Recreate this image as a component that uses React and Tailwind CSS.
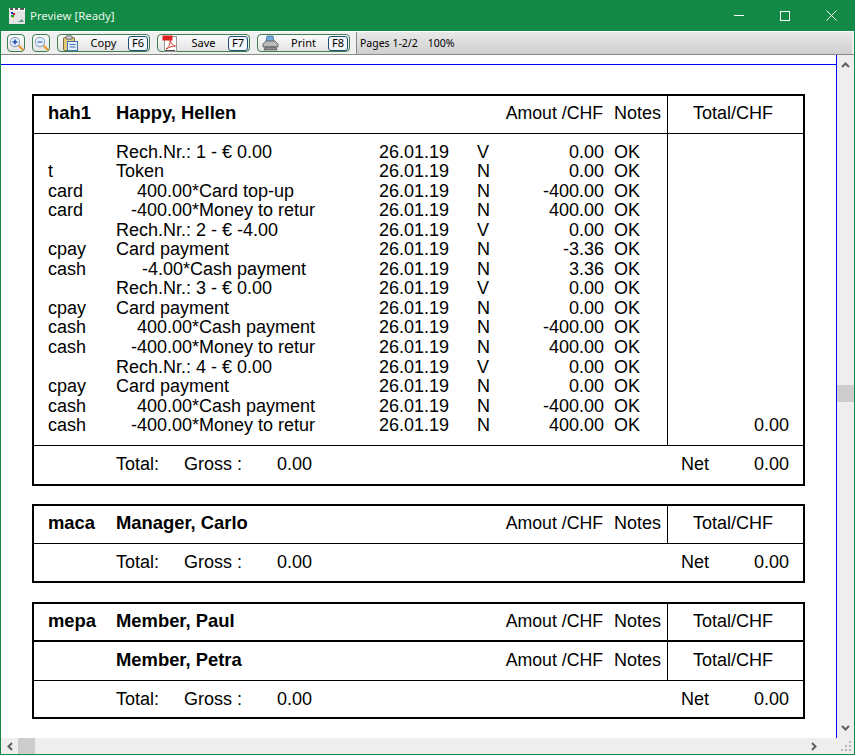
import React from "react";

const rows = [
  ["", "Rech.Nr.: 1 - € 0.00", 0, "V", "0.00"],
  ["t", "Token", 0, "N", "0.00"],
  ["card", "400.00*Card top-up", 21, "N", "-400.00"],
  ["card", "-400.00*Money to retur", 15, "N", "400.00"],
  ["", "Rech.Nr.: 2 - € -4.00", 0, "V", "0.00"],
  ["cpay", "Card payment", 0, "N", "-3.36"],
  ["cash", "-4.00*Cash payment", 26, "N", "3.36"],
  ["", "Rech.Nr.: 3 - € 0.00", 0, "V", "0.00"],
  ["cpay", "Card payment", 0, "N", "0.00"],
  ["cash", "400.00*Cash payment", 21, "N", "-400.00"],
  ["cash", "-400.00*Money to retur", 15, "N", "400.00"],
  ["", "Rech.Nr.: 4 - € 0.00", 0, "V", "0.00"],
  ["cpay", "Card payment", 0, "N", "0.00"],
  ["cash", "400.00*Cash payment", 21, "N", "-400.00"],
  ["cash", "-400.00*Money to retur", 15, "N", "400.00"],
];

function Head({ code, name, box = "h-[38px] border-b", pb = "pb-[4px]" }) {
  return (
    <div className={`flex ${box} items-stretch border-black`}>
      <div className={`flex w-[82px] items-center ${pb} pl-[14px] text-[18.4px] font-bold`}>{code}</div>
      <div className={`flex w-[345px] items-center ${pb} text-[18.4px] font-bold`}>{name}</div>
      <div className={`flex w-[142px] items-center justify-end ${pb} text-[17.7px]`}>Amout /CHF</div>
      <div className={`flex w-[64px] items-center ${pb} pl-[11px]`}>Notes</div>
      <div className={`flex flex-1 items-center border-l border-black ${pb} pl-[25px]`}>Total/CHF</div>
    </div>
  );
}

function Totals({ box = "h-[38px] pb-[2px]" }) {
  return (
    <div className={`flex ${box} items-center`}>
      <div className="w-[82px]" />
      <div className="w-[68px]">Total:</div>
      <div className="w-[93px]">Gross :</div>
      <div className="w-[404px]">0.00</div>
      <div className="w-[73px]">Net</div>
      <div className="w-[35px]">0.00</div>
    </div>
  );
}

function Key({ children }) {
  return (
    <span className="flex h-[15px] w-[20px] items-center justify-center rounded-[3px] border border-[#1f4e79] bg-[#f4f7fa] text-[11px]">
      {children}
    </span>
  );
}

function Btn({ icon, label, k }) {
  return (
    <div className="flex h-[18px] w-[93px] items-center rounded-[4px] border border-[#3f7f50] bg-gradient-to-b from-[#fbfbfb] to-[#e4e4e4] pl-[3px] pr-[1px]">
      <span className="flex w-[18px] justify-center">{icon}</span>
      <span className="flex-1 text-center text-[11px]">{label}</span>
      <Key>{k}</Key>
    </div>
  );
}

function Zoom({ plus }) {
  return (
    <div className="flex h-[18px] w-[18px] items-center justify-center rounded-[4px] border border-[#3f7f50] bg-gradient-to-b from-[#fbfbfb] to-[#e4e4e4]">
      <svg width="15" height="15" viewBox="0 0 15 15">
        <path d="M9 9l4.500 4.500" stroke="#e59a35" strokeWidth="2.2" strokeLinecap="round" />
        <circle cx="6" cy="6" r="4.600" fill="#e6f1fc" stroke="#8ea6c4" strokeWidth="1.1" />
        <path d={plus ? "M3.500 6h5M6 3.500v5" : "M3.500 6h5"} stroke={plus ? "#1c3fb0" : "#5577cc"} strokeWidth="1.4" />
      </svg>
    </div>
  );
}

const ClipIcon = (
  <svg width="16" height="16" viewBox="0 0 16 16">
    <rect x="1.500" y="2.500" width="11" height="13" rx="1" fill="#e2c777" stroke="#7a6a3a" />
    <rect x="4" y="0.800" width="6" height="3.400" rx="1" fill="#d0d0d0" stroke="#555" strokeWidth="0.8" />
    <rect x="5.500" y="6.500" width="10" height="9" fill="#e6f0fa" stroke="#3f74b5" />
    <path d="M7.500 9.500h6M7.500 12h6" stroke="#3f74b5" />
  </svg>
);
const PdfIcon = (
  <svg width="16" height="17" viewBox="0 0 16 17">
    <rect x="2.500" y="1.500" width="12" height="15" fill="#fff" stroke="#9a9a9a" />
    <rect x="0.500" y="0.500" width="10" height="5" fill="#e0201c" />
    <path d="M4 14c3-1 4.500-5 4-10 .5 4 2.500 6.500 5.500 7-3 0-6 1-9.500 3z" fill="none" stroke="#d23a30" strokeWidth="1" />
    <path d="M3 15.500h10" stroke="#444" />
  </svg>
);
const PrintIcon = (
  <svg width="17" height="16" viewBox="0 0 17 16">
    <path d="M5 1h6l1 6H4z" fill="#6fa8dc" stroke="#3d6d9e" strokeWidth="0.8" />
    <path d="M1 9l3-3h9l3 3v3H1z" fill="#b9b9b9" stroke="#555" strokeWidth="0.8" />
    <path d="M3 12h11l1 3H2z" fill="#8b8b8b" stroke="#444" strokeWidth="0.6" />
  </svg>
);

export default function App() {
  return (
    <div
      className="flex h-[755px] w-[855px] flex-col overflow-hidden border border-t-0 border-[#13894a] bg-white text-black"
      style={{ fontFamily: '"Liberation Sans", Arial, sans-serif' }}
    >
      <div className="flex h-[31px] shrink-0 items-center bg-[#128a45] text-[11.4px] text-[#e8f5ec]" style={{ fontFamily: '"Noto Sans", sans-serif' }}>
        <svg className="ml-[8px]" width="16" height="16" viewBox="0 0 16 16">
          <rect x="0" y="3" width="16" height="13" fill="#e4e4e4" />
          <rect x="0" y="0" width="16" height="3" fill="#fff" />
          <path d="M1 1h3M6 1h3M11 1h4" stroke="#222" strokeWidth="1.4" />
          <rect x="2" y="4" width="2" height="2" fill="#1c2bd0" />
          <rect x="4" y="5" width="2" height="2" fill="#d01c1c" />
          <rect x="2" y="7" width="3" height="2" fill="#14a03c" />
          <rect x="3" y="9" width="2" height="1" fill="#e0c014" />
          <path d="M9 14l4-3 2 3z" fill="#5a9a80" />
        </svg>
        <span className="ml-[5px]">Preview [Ready]</span>
        <div className="ml-auto flex h-full items-center">
          <div className="flex h-full w-[46px] items-center justify-center">
            <span className="h-px w-[10px] bg-white" />
          </div>
          <div className="flex h-full w-[46px] items-center justify-center">
            <span className="h-[10px] w-[10px] border border-white" />
          </div>
          <div className="flex h-full w-[46px] items-center justify-center">
            <svg width="11" height="11" viewBox="0 0 11 11">
              <path d="M.5.5l10 10M10.500.5l-10 10" stroke="#fff" />
            </svg>
          </div>
        </div>
      </div>

      <div
        className="flex h-[24px] shrink-0 items-stretch border-t border-b border-t-white border-b-[#8a8a8a] bg-[#f0f0f0] text-[10.5px]"
        style={{ fontFamily: '"Noto Sans", sans-serif' }}
      >
        <div className="flex w-[355px] items-center gap-[7px] pl-[6px]">
          <Zoom plus />
          <Zoom />
          <Btn icon={ClipIcon} label="Copy" k="F6" />
          <Btn icon={PdfIcon} label="Save" k="F7" />
          <Btn icon={PrintIcon} label="Print" k="F8" />
        </div>
        <div className="mr-[2px] flex flex-1 items-center gap-[10px] border-l border-[#8a8a8a] bg-gradient-to-b from-[#e9e9e9] to-[#cfcfcf] pl-[3px] pt-[1px]">
          <span>Pages 1-2/2</span>
          <span>100%</span>
        </div>
      </div>

      <div className="flex min-h-0 flex-1">
        <div className="flex-1 border-r border-[#0000ff] pt-[9px]">
          <div className="border-t border-[#0000ff] pl-[31px] pt-[29px] text-[18px] leading-[20px]">
            <div className="w-[773px] border-2 border-black">
              <Head code="hah1" name="Happy, Hellen" />
              <div className="flex h-[312px] border-b border-black">
                <div className="w-[633px] pt-[7.74px]">
                  {rows.map((r, i) => (
                    <div key={i} className="flex h-[19.55px] items-center">
                      <div className="w-[82px] pl-[14px]">{r[0]}</div>
                      <div className="w-[263px]" style={{ paddingLeft: r[2] }}>{r[1]}</div>
                      <div className="w-[98px]">26.01.19</div>
                      <div className="w-[40px]">{r[3]}</div>
                      <div className="w-[87px] text-right">{r[4]}</div>
                      <div className="flex-1 pl-[10px]">OK</div>
                    </div>
                  ))}
                </div>
                <div className="flex flex-1 items-end justify-end border-l border-black pb-[10px] pr-[14px]">0.00</div>
              </div>
              <Totals />
            </div>

            <div className="mt-[18px] w-[773px] border-2 border-black">
              <Head code="maca" name="Manager, Carlo" />
              <Totals box="h-[37px] pb-[2px]" />
            </div>

            <div className="mt-[19px] w-[773px] border-2 border-black">
              <Head code="mepa" name="Member, Paul" box="h-[38px] border-b-2" pb="pb-[3px]" />
              <Head code="" name="Member, Petra" box="h-[39px] border-b" pb="pb-[3px]" />
              <Totals box="h-[36px] pb-[1px]" />
            </div>
          </div>
        </div>
        <div className="flex w-[17px] shrink-0 flex-col items-center bg-[#eeeeee]">
          <svg className="mt-[7px]" width="9" height="6" viewBox="0 0 9 6">
            <path d="M1 5l3.500-3.500L8 5" fill="none" stroke="#606060" strokeWidth="2" />
          </svg>
          <div className="mt-[317px] h-[17px] w-[17px] bg-[#cdcdcd]" />
          <svg className="mt-auto mb-[7px]" width="9" height="6" viewBox="0 0 9 6">
            <path d="M1 1l3.500 3.500L8 1" fill="none" stroke="#606060" strokeWidth="2" />
          </svg>
        </div>
      </div>

      <div className="flex h-[16px] shrink-0 items-center bg-[#eeeeee]">
        <svg className="ml-[6px]" width="6" height="9" viewBox="0 0 6 9">
          <path d="M5 1L1.500 4.500 5 8" fill="none" stroke="#606060" strokeWidth="2" />
        </svg>
        <div className="ml-[5px] h-full w-[17px] bg-[#cdcdcd]" />
        <svg className="ml-auto mr-[24px]" width="6" height="9" viewBox="0 0 6 9">
          <path d="M1 1l3.500 3.500L1 8" fill="none" stroke="#606060" strokeWidth="2" />
        </svg>
        <svg className="mr-[2px]" width="11" height="11" viewBox="0 0 11 11" fill="#b5b5b5">
          <rect x="8" y="0" width="2" height="2" />
          <rect x="4" y="4" width="2" height="2" />
          <rect x="8" y="4" width="2" height="2" />
          <rect x="0" y="8" width="2" height="2" />
          <rect x="4" y="8" width="2" height="2" />
          <rect x="8" y="8" width="2" height="2" />
        </svg>
      </div>
    </div>
  );
}
